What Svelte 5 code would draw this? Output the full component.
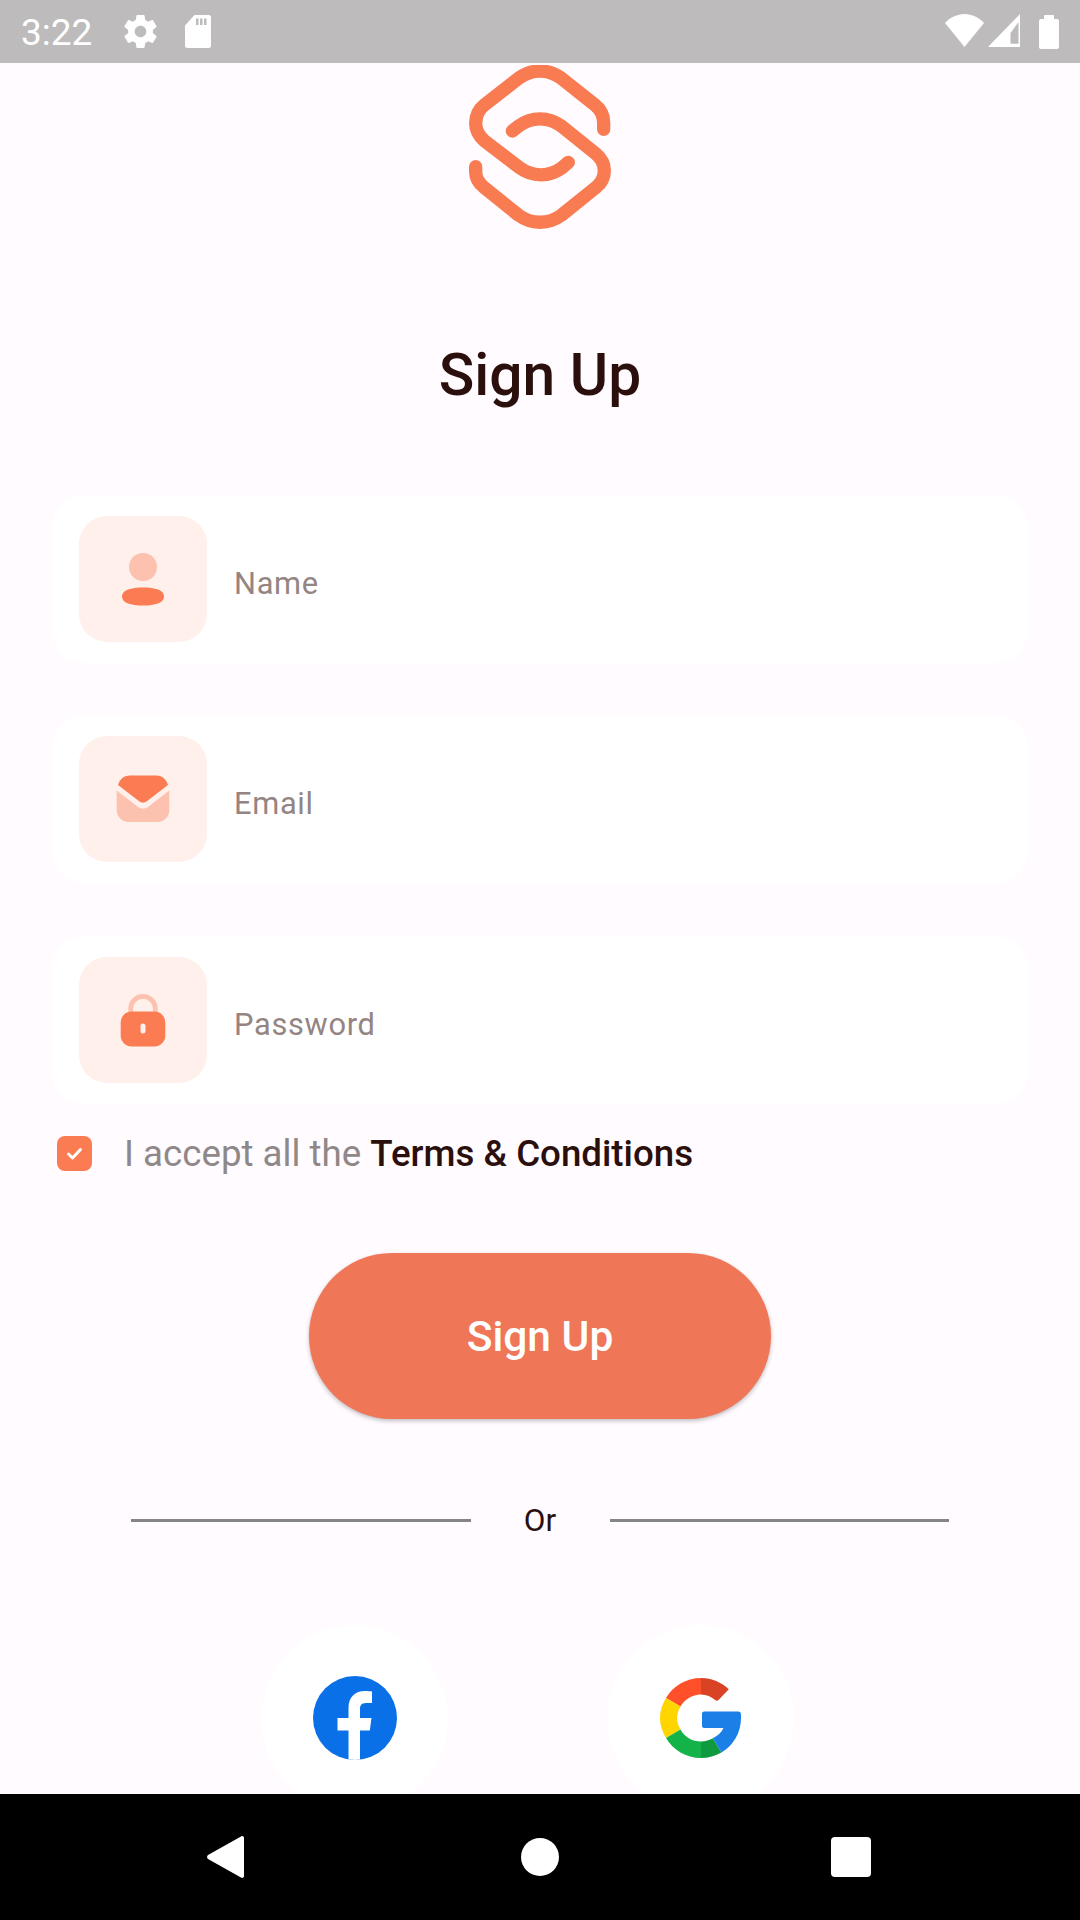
<script>
  const fields = [
    { label: 'Name', kind: 'person' },
    { label: 'Email', kind: 'mail' },
    { label: 'Password', kind: 'lock' }
  ];
</script>

<div class="screen">
  <header class="status">
    <span class="time">3:22</span>
    <svg class="gear" viewBox="2 2 20 20"><path d="M19.43 12.98c.04-.32.07-.64.07-.98s-.03-.66-.07-.98l2.11-1.65c.19-.15.24-.42.12-.64l-2-3.46c-.12-.22-.39-.3-.61-.22l-2.49 1c-.52-.4-1.08-.73-1.69-.98l-.38-2.65C14.46 2.18 14.25 2 14 2h-4c-.25 0-.46.18-.49.42l-.38 2.65c-.61.25-1.17.59-1.69.98l-2.49-1c-.23-.09-.49 0-.61.22l-2 3.46c-.13.22-.07.49.12.64l2.11 1.65c-.04.32-.07.65-.07.98s.03.66.07.98l-2.11 1.65c-.19.15-.24.42-.12.64l2 3.46c.12.22.39.3.61.22l2.49-1c.52.4 1.08.73 1.69.98l.38 2.65c.03.24.24.42.49.42h4c.25 0 .46-.18.49-.42l.38-2.65c.61-.25 1.17-.59 1.69-.98l2.49 1c.23.09.49 0 .61-.22l2-3.46c.12-.22.07-.49-.12-.64l-2.11-1.65zM12 15.5c-1.93 0-3.5-1.57-3.5-3.5s1.57-3.5 3.5-3.5 3.5 1.57 3.5 3.5-1.57 3.5-3.5 3.5z" fill="#fff"/></svg>
    <svg class="sd" viewBox="0 0 26 33"><path fill="#fff" fill-rule="evenodd" d="M9.500 0H23.500A2.500 2.500 0 0 1 26 2.500V30.500A2.500 2.500 0 0 1 23.500 33H2.500A2.500 2.500 0 0 1 0 30.500V10.500ZM11 3.500V10H13.500V3.500ZM15 3.500V10H17.500V3.500ZM19 3.500V10H21.500V3.500Z"/></svg>
    <span class="spacer"></span>
    <svg class="wifi" viewBox="0 0 39 33"><path fill="#fff" d="M19.500 33 0 9C5 3.500 12 0 19.500 0S34 3.500 39 9Z"/></svg>
    <svg class="signal" viewBox="0 0 32 33"><path fill="#fff" fill-rule="evenodd" d="M32 0V33H0ZM30.500 8 22.500 19V29.700H30.500Z"/></svg>
    <svg class="battery" viewBox="0 0 20 34"><path fill="#fff" d="M5 1A1 1 0 0 1 6 0H14A1 1 0 0 1 15 1V4H18A2 2 0 0 1 20 6V32A2 2 0 0 1 18 34H2A2 2 0 0 1 0 32V6A2 2 0 0 1 2 4H5Z"/></svg>
  </header>

  <main class="content">
    <svg class="logo" viewBox="84 45 432 495" fill="none" stroke="#F97B52" stroke-width="40" stroke-linecap="round" stroke-linejoin="round">
      <path d="M491 238V218C491 196 481 178 465 165L363 84C324 56 276 56 237 84L133 165C117 178 107 196 107 220C107 242 117 258 133 272L237 352C276 382 330 382 368 352L385 337"/>
      <path d="M217 243L235 229C274 199 326 199 365 229L467 311C483 324 493 340 493 362C493 384 483 400 467 413L365 495C326 524 274 524 235 495L133 413C117 400 107 384 107 365V350"/>
    </svg>

    <h1 class="title">Sign Up</h1>

    <div class="fields">
      {#each fields as f}
        <div class="card">
          <div class="icon-box">
            <svg viewBox="0 0 128 126">
              {#if f.kind === 'person'}
                <circle cx="64" cy="51" r="14" fill="#FCC1AF"/>
                <path d="M43 80.500C43 74 52 71.500 64 71.500S85 74 85 80.500 76 89.500 64 89.500 43 87 43 80.500Z" fill="#FB7C53"/>
              {:else if f.kind === 'mail'}
                <path d="M37.700 54.500 59 71C62 73.300 66 73.300 69 71L90.300 54.500V74A12 12 0 0 1 78.300 86H49.700A12 12 0 0 1 37.700 74Z" fill="#FCC1AF"/>
                <path d="M39 49C41 42.500 45.500 39.500 51 39.500H77C82.500 39.500 87 42.500 89 49L67.500 65.500C65.300 67 62.700 67 60.500 65.500Z" fill="#FB7C53"/>
              {:else}
                <path d="M51.700 58V51.700A12.300 12.300 0 0 1 76.300 51.700V58" fill="none" stroke="#FCC1AF" stroke-width="4.700"/>
                <rect x="41.700" y="54.500" width="44.600" height="35" rx="11" fill="#FB7C53"/>
                <rect x="61.500" y="66.500" width="5" height="10" rx="2.500" fill="#FFF0EB"/>
              {/if}
            </svg>
          </div>
          <span class="label">{f.label}</span>
        </div>
      {/each}
    </div>

    <div class="terms">
      <span class="check">
        <svg viewBox="0 0 35 35"><path d="M11.500 18 15.500 22 23.500 13.500" fill="none" stroke="#fff" stroke-width="3" stroke-linecap="round" stroke-linejoin="round"/></svg>
      </span>
      <span class="terms-text">I accept all the <b>Terms &amp; Conditions</b></span>
    </div>

    <div class="btn">Sign Up</div>

    <div class="divider">
      <span class="line"></span>
      <span class="or">Or</span>
      <span class="line"></span>
    </div>

    <div class="social">
      <div class="circle">
        <svg class="fb" viewBox="0 0 84 84">
          <defs><clipPath id="fbc"><circle cx="42" cy="42" r="42"/></clipPath></defs>
          <circle cx="42" cy="42" r="42" fill="#0A70E8"/>
          <path clip-path="url(#fbc)" fill="#fff" d="M35.500 84V54.500H24.500V42H35.500V32C35.500 21 42 15 52 15C55.500 15 59 15.500 59 15.500V27H53C48 27 47 30 47 33V42H58.500L56.800 54.500H47V84Z"/>
        </svg>
      </div>
      <div class="circle">
        <svg class="g" viewBox="0 0 82 82">
          <path fill="#FF5029" d="M41 1C26 1 13 9 6 21L20.500 29.500C24.500 22.500 32 17.500 41 17.500Z"/>
          <path fill="#D94224" d="M41 1C52 1 61.500 5.300 68.800 12.300L58.500 23C57.500 24 56.500 24 55.500 23.300C51.500 19.800 46.500 17.500 41 17.500Z"/>
          <path fill="#FFD500" d="M6 21C2.500 27 0 33.500 0 41S2.500 55 6 61L20.500 52.500C18.500 49 17 45 17 41S18.500 33 20.500 29.500Z"/>
          <path fill="#14B34A" d="M6 61C13 73 26 81 41 81V64.500C32 64.500 24.500 60 20.500 52.500Z"/>
          <path fill="#0F9A40" d="M41 81C48.500 81 55.500 79 61.500 75.500L52.800 61.300C49.500 63.300 45.500 64.500 41 64.500Z"/>
          <path fill="#1A80E8" d="M61.500 75.500C73.500 68.500 81 55.500 81 41V38C81 35.500 80 34.500 78 34.500H44C43 34.500 42 35.500 42 36.500V49C42 50 43 51 44 51H63.500C61.500 55.500 57.500 59 52.800 61.300Z"/>
        </svg>
      </div>
    </div>
  </main>

  <footer class="nav">
    <svg class="back" viewBox="0 0 37 42"><path fill="#fff" d="M34 0.500C35.500-0.500 37 0.500 37 2V40C37 41.500 35.500 42.500 34 41.500L1 23C-0.300 22 -0.300 20 1 19Z"/></svg>
    <span class="home"></span>
    <span class="recent"></span>
  </footer>
</div>

<style>
  :global(body) {
    margin: 0;
    background: #fffbff;
  }
  .screen {
    width: 1080px;
    height: 1920px;
    display: flex;
    flex-direction: column;
    overflow: hidden;
    background: #fffbff;
    font-family: Roboto, sans-serif;
  }
  .status {
    height: 63px;
    flex: none;
    display: flex;
    align-items: center;
    background: #bdbbbb;
    padding: 0 21px;
    box-sizing: border-box;
  }
  .time {
    color: #fff;
    font-size: 37px;
    font-weight: 400;
    line-height: 63px;
    width: 76px;
    margin-top: 2px;
  }
  .gear {
    width: 33px;
    height: 33px;
    margin-left: 27px;
  }
  .sd {
    width: 26px;
    height: 33px;
    margin-left: 28px;
  }
  .spacer {
    flex: 1;
  }
  .wifi {
    width: 39px;
    height: 33px;
    margin-bottom: 2px;
  }
  .signal {
    width: 32px;
    height: 33px;
    margin-left: 4px;
    margin-bottom: 2px;
  }
  .battery {
    width: 20px;
    height: 34px;
    margin-left: 19px;
  }
  .content {
    flex: 1;
    min-height: 0;
    overflow: hidden;
    display: flex;
    flex-direction: column;
    align-items: center;
  }
  .logo {
    width: 144px;
    height: 165px;
    margin-top: 2px;
    flex: none;
  }
  .title {
    margin: 112px 0 0;
    font-size: 58.700px;
    line-height: 66px;
    font-weight: 500;
    color: #2a0f0c;
  }
  .fields {
    margin-top: 87px;
    display: flex;
    flex-direction: column;
    gap: 53px;
    width: 976px;
  }
  .card {
    height: 167.500px;
    display: flex;
    align-items: center;
    background: #fff;
    border-radius: 32px;
    padding-left: 27px;
    box-sizing: border-box;
  }
  .icon-box {
    width: 128px;
    height: 126px;
    border-radius: 28px;
    background: #fff0eb;
    flex: none;
  }
  .icon-box svg {
    display: block;
    width: 128px;
    height: 126px;
  }
  .label {
    margin-left: 27px;
    margin-top: 9px;
    font-size: 30.800px;
    letter-spacing: 0.7px;
    color: #948582;
  }
  .terms {
    width: 976px;
    margin-top: 32px;
    display: flex;
    align-items: center;
    height: 36px;
  }
  .check {
    width: 35px;
    height: 35px;
    margin-left: 5px;
    border-radius: 8px;
    background: #fb7c53;
    flex: none;
  }
  .check svg {
    display: block;
    width: 35px;
    height: 35px;
  }
  .terms-text {
    margin-left: 32px;
    font-size: 36.700px;
    color: #8f8888;
    white-space: nowrap;
  }
  .terms-text b {
    font-weight: 500;
    color: #2a0f0c;
  }
  .btn {
    margin-top: 81.500px;
    width: 462px;
    height: 166px;
    border-radius: 83px;
    background: #ef7657;
    box-shadow: 0 2px 4px rgba(0, 0, 0, 0.25);
    color: #fff;
    font-size: 42.500px;
    font-weight: 500;
    display: flex;
    align-items: center;
    justify-content: center;
    flex: none;
  }
  .divider {
    margin-top: 81px;
    width: 818px;
    height: 40px;
    display: flex;
    align-items: center;
    flex: none;
  }
  .line {
    flex: 1;
    height: 3px;
    background: #858585;
  }
  .or {
    width: 139px;
    text-align: center;
    font-size: 31.500px;
    color: #2a0f0c;
    line-height: 40px;
    height: 40px;
    padding-top: 1px;
    box-sizing: border-box;
  }
  .social {
    margin-top: 85px;
    margin-right: 26px;
    display: flex;
    gap: 159px;
    flex: none;
  }
  .circle {
    width: 187px;
    height: 187px;
    border-radius: 50%;
    background: #fff;
    display: flex;
    align-items: center;
    justify-content: center;
  }
  .fb {
    width: 84px;
    height: 84px;
    margin: 0 0 2px 2px;
  }
  .g {
    width: 82px;
    height: 82px;
    margin: 0 0 2px 2px;
  }
  .nav {
    height: 126px;
    flex: none;
    background: #000;
    display: flex;
    align-items: center;
  }
  .back {
    width: 37px;
    height: 42px;
    margin-left: 207px;
    margin-top: -1px;
  }
  .home {
    width: 38px;
    height: 38px;
    border-radius: 50%;
    background: #fff;
    margin-left: 277px;
    margin-top: -1px;
  }
  .recent {
    width: 40px;
    height: 40px;
    border-radius: 4px;
    background: #fff;
    margin-left: 272px;
    margin-top: -1px;
  }
</style>
